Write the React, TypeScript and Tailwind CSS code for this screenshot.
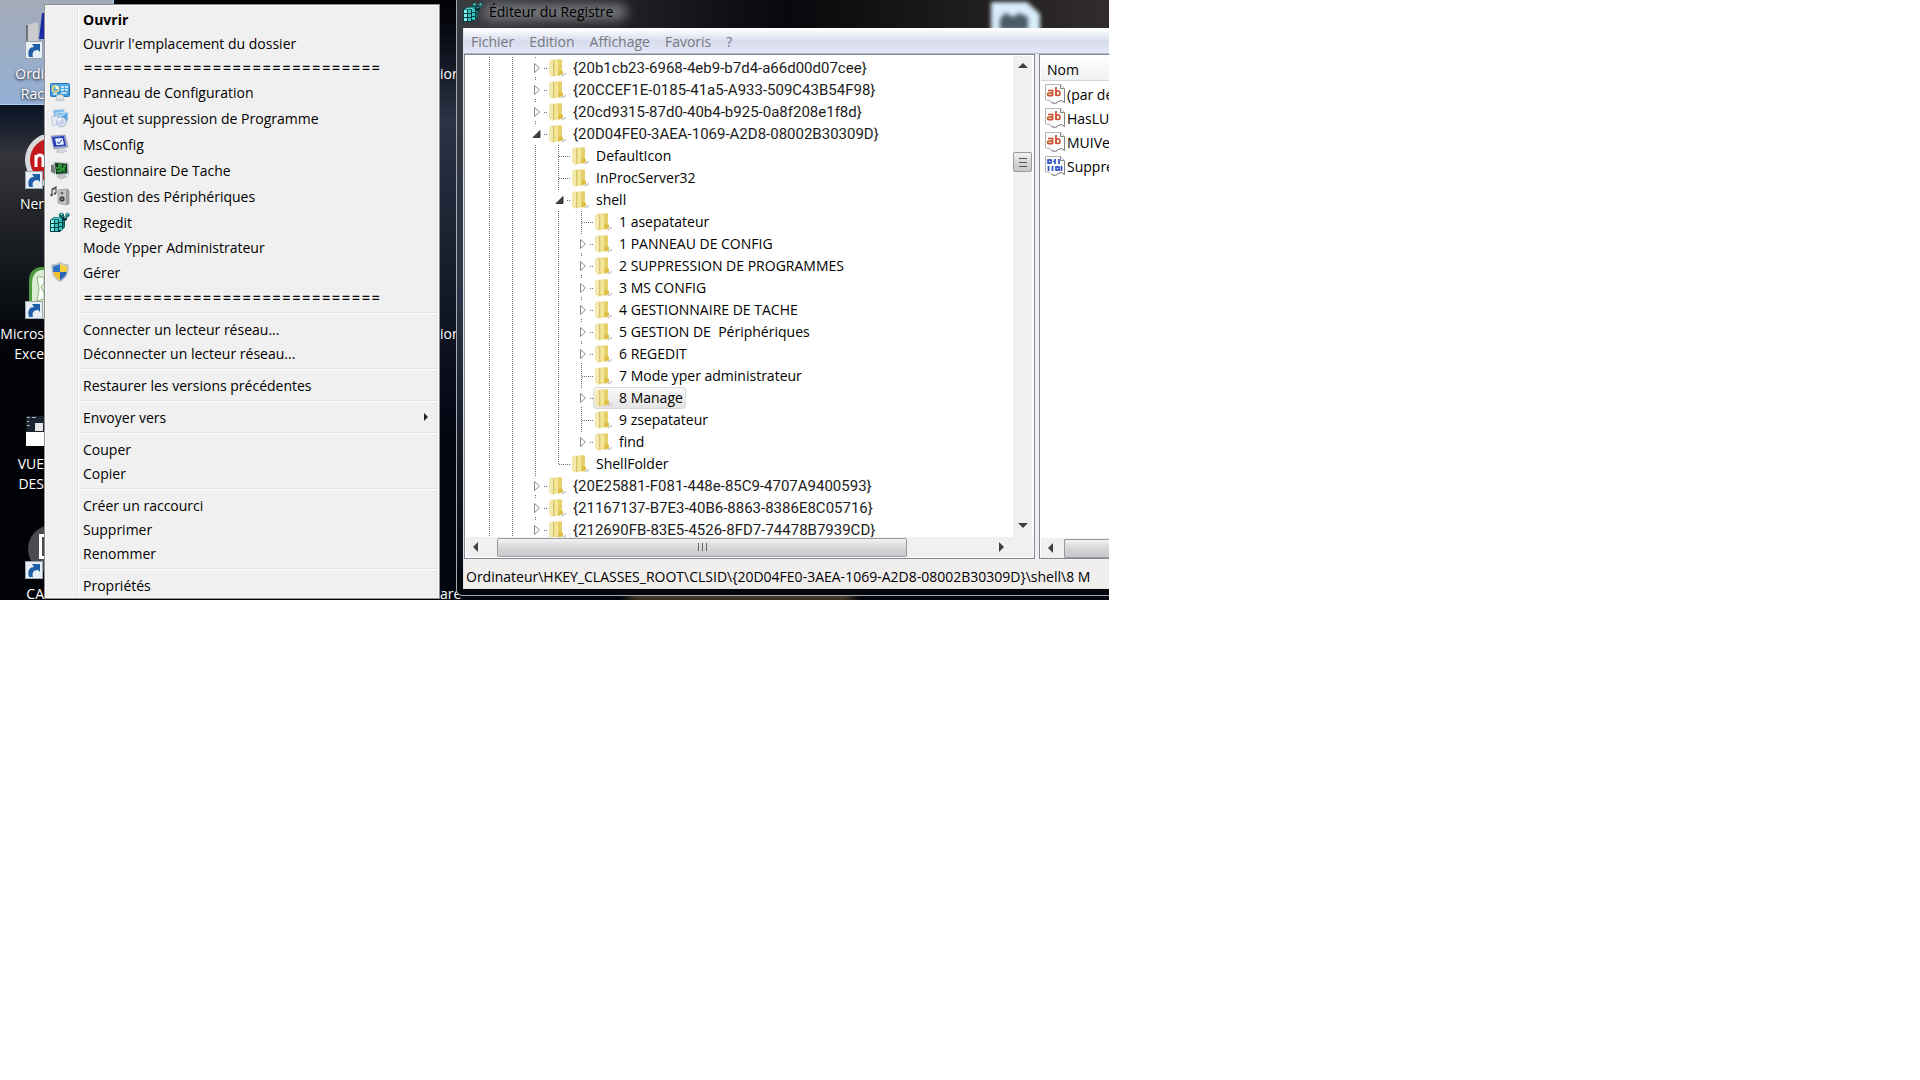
import React from "react";

type Cell = "line" | "tee" | "end" | "closed" | "open" | "closedEnd";
type Node = { cells: Cell[]; label: string; selected?: boolean };

const sep = "==============================";

function Regedit({ className = "" }: { className?: string }) {
  const cubes: [number, number][] = [
    [1, 8], [5, 8], [9, 7], [1, 12], [5, 12], [9, 11], [1, 16], [5, 16], [9, 15],
  ];
  return (
    <svg viewBox="0 0 20 20" className={"h-5 w-5 shrink-0 " + className} aria-hidden="true">
      <path d="M0 8 4 5h10l1 2v8l-5 5H0z" fill="#063d41" />
      <path d="M1 7.5 4.500 5.500l8.500-.3-3 2z" fill="#4fd0cf" />
      {cubes.map(([x, y]) => (
        <rect key={x + "-" + y} x={x} y={y} width="3" height="3" fill={x < 5 ? "#7df3ee" : "#35c4c2"} />
      ))}
      <path d="m13 9 1.500-1.500v3L13 12zm0 4 1.500-1.500v3L13 16z" fill="#148486" />
      <path d="m9 2 2.500-1.500L14 2v2.500L11.500 6 9 4.500z" fill="#0b5e62" />
      <path d="m10 2.300 1.500-.8 1.500.8-1.500 1z" fill="#8ff5f0" />
      <path d="m15.500 2 2-1.500 2 1.500v2l-2 1.500-2-1.500z" fill="#126c70" />
      <path d="m16.300 2.200 1.200-.7 1.200.7-1.200.9z" fill="#9af5f1" />
      <path d="m13 5.500 2-1.200 2 1.200v2L15 9l-2-1.500z" fill="#042c30" />
      <path d="m13.800 5.700 1.200-.6 1.200.6-1.200.8z" fill="#5edbd7" />
    </svg>
  );
}

function Panel() {
  return (
    <svg viewBox="0 0 20 20" className="h-5 w-5" aria-hidden="true">
      <rect x="0.500" y="1.500" width="19" height="13" rx="1" fill="#3b97d8" stroke="#2d78b4" />
      <path d="M1 2h18v5L1 11z" fill="#65b9ec" opacity=".6" />
      <circle cx="5.500" cy="7" r="3" fill="none" stroke="#f4d36a" strokeWidth="1.500" />
      <path d="M5.500 7V4a3 3 0 0 1 3 3z" fill="#fff" />
      <path d="M11 5h3M15 5h3M11 8h3M15 8h3M11 11h6M3 12h4" stroke="#e8f6ff" strokeWidth="1.300" />
      <ellipse cx="10" cy="15.500" rx="4" ry="3" fill="#e3e6e8" stroke="#a0a7ad" strokeWidth=".6" />
      <ellipse cx="10" cy="18" rx="5" ry="1.300" fill="#c3c8cc" opacity=".7" />
    </svg>
  );
}

function Programs() {
  return (
    <svg viewBox="0 0 20 20" className="h-5 w-5" aria-hidden="true">
      <path d="m3 2 11-1 1 9-11 1z" fill="#7fbce8" stroke="#c4dcee" />
      <path d="m6 5 12-1v9l-11 1z" fill="#5b9fd9" stroke="#d5e4f0" />
      <path d="m7 6 10-1-9 7z" fill="#9cd0f3" />
      <path d="m1 9 7-1 1 8-6 2z" fill="#e6eaf4" stroke="#b7bfd2" strokeWidth=".8" />
      <circle cx="11.500" cy="14" r="4.800" fill="#d5def2" stroke="#9ba9cb" strokeWidth=".7" />
      <path d="m11.500 14-4-2a5 5 0 0 1 3-2.500z" fill="#fff" />
      <circle cx="11.500" cy="14" r="1.400" fill="#fff" stroke="#8997ba" strokeWidth=".7" />
    </svg>
  );
}

function Monitor({ green = false }: { green?: boolean }) {
  return green ? (
    <svg viewBox="0 0 20 20" className="h-5 w-5" aria-hidden="true">
      <path d="m1 5 4-1v10l-4-2z" fill="#777e80" />
      <path d="m4 2 14 1 1 11-13 1z" fill="#9ba3a5" stroke="#c7cccd" strokeWidth=".7" />
      <path d="m5 3 12 1v9l-11 1z" fill="#123c1a" />
      <path d="M6 8h3V5h2v4h3V6h2M7 11h4V9h3v3" fill="none" stroke="#35b244" strokeWidth="1.300" />
      <path d="m9 15 5-1 3 3-6 2-4-2z" fill="#c3c7c9" stroke="#9ca2a5" strokeWidth=".5" />
    </svg>
  ) : (
    <svg viewBox="0 0 20 20" className="h-5 w-5" aria-hidden="true">
      <path d="m1 2 14-1 3 12-14 2z" fill="#aeb3cf" stroke="#8389ae" strokeWidth=".7" />
      <path d="m2 3 12-1 2 10-12 1z" fill="#2740b9" />
      <path d="m5 4.500 7.500-.5 1.500 6.500-7.500.7z" fill="#e9f3ff" />
      <path d="m7 8 2 1.500 3-4" fill="none" stroke="#3a62c9" strokeWidth="1.200" />
      <path d="m8 15 5-1 4 3-5 2-6-1z" fill="#d6d8de" stroke="#aaaebb" strokeWidth=".5" />
    </svg>
  );
}

function Devices() {
  return (
    <svg viewBox="0 0 20 20" className="h-5 w-5" aria-hidden="true">
      <path d="M2 9V3l4-2v6M2 4l4-2" fill="none" stroke="#53585c" strokeWidth="1.200" />
      <circle cx="1.600" cy="9" r="1.400" fill="#53585c" />
      <circle cx="5" cy="7.500" r="1.300" fill="#53585c" />
      <path d="m8 4 8-1 3 1v14l-3 1-8-2z" fill="#c3c5c6" stroke="#8e9192" strokeWidth=".7" />
      <path d="M16 3v16l3-1V4z" fill="#9a9b9d" />
      <circle cx="12" cy="7" r="1.600" fill="#707274" />
      <circle cx="12" cy="13" r="3.200" fill="#3c3e40" stroke="#e0e1e2" strokeWidth=".8" />
      <circle cx="12" cy="13" r="1" fill="#9a9c9e" />
    </svg>
  );
}

function Shield() {
  return (
    <svg viewBox="0 0 20 20" className="h-5 w-5" aria-hidden="true">
      <path d="M10 .5c2.500 1.600 5 2.200 8 2.400.3 8-1.500 13-8 16.600C3.500 15.900 1.700 10.900 2 2.900 5 2.700 7.500 2.100 10 .5z" fill="#d5dade" stroke="#8d99a2" strokeWidth=".7" />
      <path d="M10 2v8H3.300c-.3-2-.3-4-.2-6C5.800 3.700 8 3.200 10 2z" fill="#2e6fc4" />
      <path d="M10 2c2 1.200 4.200 1.700 6.900 2 .1 2 .1 4-.2 6H10z" fill="#f6cf3e" />
      <path d="M3.300 10H10v8.200C6 16 4 13.500 3.300 10z" fill="#f2c02c" />
      <path d="M16.700 10H10v8.200c4-2.200 6-4.700 6.700-8.200z" fill="#2c63b5" />
    </svg>
  );
}

function Folder() {
  return (
    <svg viewBox="0 0 17 20" className="h-5 w-[17px] shrink-0" aria-hidden="true">
      <path d="M12 17.500 17 14.500v2L13 18.500z" fill="#bdbdbd" opacity=".8" />
      <path d="M0 3 3 1l2 1v16l-2 1-3-3z" fill="#f3e9ae" />
      <path d="M4 2 11 1l2 1v13l-8 3.500z" fill="#eadb85" />
      <path d="M6 3 13 1.500V14l-7 3z" fill="#f3e697" />
      <path d="M9 2.400 13 1.500V14l-4 2z" fill="#e6d06b" />
      <path d="M10 12l4 1v3l-5 2z" fill="#dfbd43" />
      <path d="M4.500 2v16" stroke="#d0ba66" strokeWidth=".8" />
    </svg>
  );
}

function Guide({ kind }: { kind: Cell }) {
  const dots = { stroke: "#6b6b6b", strokeDasharray: "1 1", shapeRendering: "crispEdges" as const };
  const arrow = kind === "closed" || kind === "closedEnd";
  return (
    <svg viewBox="0 0 23 22" className="h-[22px] w-[23px] shrink-0" aria-hidden="true">
      {(kind === "line" || kind === "tee") && <path d="M11.500 0v22" {...dots} />}
      {kind === "end" && <path d="M11.500 0v11" {...dots} />}
      {(kind === "tee" || kind === "end") && <path d="M12 11.500h11" {...dots} />}
      {(arrow || kind === "open") && <path d="M11.500 0v2M20 11.500h3" {...dots} />}
      {kind === "closed" && <path d="M11.500 20v2" {...dots} />}
      {arrow && <path d="M10.500 6.500v9l5-4.500z" fill="#fff" stroke="#8c8c8c" />}
      {kind === "open" && <path d="M9 14.500h7v-7z" fill="#404040" stroke="#202020" strokeWidth=".8" />}
    </svg>
  );
}

const top = (label: string, kind: Cell = "closed"): Node => ({ cells: ["line", "line", kind], label });
const sub = (label: string, kind: Cell): Node => ({ cells: ["line", "line", "line", kind], label });
const leaf = (label: string, kind: Cell = "closed", selected = false): Node => ({
  cells: ["line", "line", "line", "line", kind],
  label,
  selected,
});

const tree: Node[] = [
  top("{20b1cb23-6968-4eb9-b7d4-a66d00d07cee}"),
  top("{20CCEF1E-0185-41a5-A933-509C43B54F98}"),
  top("{20cd9315-87d0-40b4-b925-0a8f208e1f8d}"),
  top("{20D04FE0-3AEA-1069-A2D8-08002B30309D}", "open"),
  sub("DefaultIcon", "tee"),
  sub("InProcServer32", "tee"),
  sub("shell", "open"),
  leaf("1 asepatateur", "tee"),
  leaf("1 PANNEAU DE CONFIG"),
  leaf("2 SUPPRESSION DE PROGRAMMES"),
  leaf("3 MS CONFIG"),
  leaf("4 GESTIONNAIRE DE TACHE"),
  leaf("5 GESTION DE  Périphériques"),
  leaf("6 REGEDIT"),
  leaf("7 Mode yper administrateur", "tee"),
  leaf("8 Manage", "closed", true),
  leaf("9 zsepatateur", "tee"),
  leaf("find", "closedEnd"),
  sub("ShellFolder", "end"),
  top("{20E25881-F081-448e-85C9-4707A9400593}"),
  top("{21167137-B7E3-40B6-8863-8386E8C05716}"),
  top("{212690FB-83E5-4526-8FD7-74478B7939CD}"),
];

type Item = { label: string; icon?: React.ReactNode; bold?: boolean; more?: boolean; tall?: boolean } | null;

const menu: Item[] = [
  { label: "Ouvrir", bold: true },
  { label: "Ouvrir l'emplacement du dossier" },
  { label: sep },
  { label: "Panneau de Configuration", icon: <Panel />, tall: true },
  { label: "Ajout et suppression de Programme", icon: <Programs />, tall: true },
  { label: "MsConfig", icon: <Monitor />, tall: true },
  { label: "Gestionnaire De Tache", icon: <Monitor green />, tall: true },
  { label: "Gestion des Périphériques", icon: <Devices />, tall: true },
  { label: "Regedit", icon: <Regedit />, tall: true },
  { label: "Mode Ypper Administrateur" },
  { label: "Gérer", icon: <Shield />, tall: true },
  { label: sep },
  null,
  { label: "Connecter un lecteur réseau..." },
  { label: "Déconnecter un lecteur réseau..." },
  null,
  { label: "Restaurer les versions précédentes" },
  null,
  { label: "Envoyer vers", more: true },
  null,
  { label: "Couper" },
  { label: "Copier" },
  null,
  { label: "Créer un raccourci" },
  { label: "Supprimer" },
  { label: "Renommer" },
  null,
  { label: "Propriétés" },
];

function ContextMenu() {
  return (
    <div role="menu" className="absolute top-1 left-11 w-[396px] border border-[#8f8f8f] bg-[#f0f0f0] px-[3px] pt-0.5 pb-px shadow-[inset_0_0_0_1px_#f8f8f8]">
      {menu.map((item, i) =>
        item ? (
          <button
            key={i}
            role="menuitem"
            className={"flex w-full items-center text-left whitespace-nowrap " + (item.tall ? "h-[26px]" : "h-6")}
          >
            <span className="flex h-full w-[30px] shrink-0 items-center border-r border-[#e2e3e3] pl-0.5">{item.icon}</span>
            <span
              className={
                "flex h-full flex-1 items-center border-l border-white pl-1 " +
                (item.bold ? "font-bold" : item.label === sep ? "font-[Inter] text-[15px]" : "")
              }
            >
              {item.label}
            </span>
            {item.more && (
              <svg viewBox="0 0 4 8" className="mr-2 h-2 w-1" aria-hidden="true">
                <path d="m0 0 4 4-4 4z" fill="#202020" />
              </svg>
            )}
          </button>
        ) : (
          <div key={i} role="separator" className="flex h-2">
            <span className="w-[30px] shrink-0 border-r border-[#e2e3e3]" />
            <span className="flex flex-1 items-center border-l border-white">
              <span className="h-0.5 w-full border-t border-b border-t-[#e0e0e0] border-b-white" />
            </span>
          </div>
        )
      )}
    </div>
  );
}

function Arrow({ d }: { d: string }) {
  return (
    <svg viewBox="0 0 10 10" className="h-2.5 w-2.5 shrink-0" aria-hidden="true">
      <path d={d} fill="#404040" />
    </svg>
  );
}
const UP = "M0 8 5 3l5 5z";
const DOWN = "M0 2h10L5 7z";
const LEFT = "M7 0v10L2 5z";
const RIGHT = "M3 0v10l5-5z";

function Value({ label, binary = false }: { label: string; binary?: boolean }) {
  return (
    <div className="flex h-6 items-center gap-0.5 whitespace-nowrap">
      <svg viewBox="0 0 20 20" className="h-5 w-5 shrink-0" aria-hidden="true">
        <path d="M.5 .5h15l4 4v14l-3-2-3 1-3 2-4-1-2-2-4-.5z" fill="#fbfbfb" stroke="#b5b5b5" />
        <path d="M15.500.5v4h4M19.500 5v13.500l-3-2-3 1-3 2-4-1" fill="none" stroke="#858585" />
        {binary ? (
          <g fill="none" stroke="#2d4fc4" strokeWidth="1.700">
            <rect x="3" y="4" width="3" height="3" />
            <path d="M10 3v5M14 3v5M8 5.500h1M3.500 10v5M7.500 10v5M16.500 10v5" />
            <rect x="11" y="11" width="3" height="3" />
          </g>
        ) : (
          <g fill="none" stroke="#c8502f" strokeWidth="1.700">
            <path d="M3 6.500h4.500V12M7.500 9H4a1.200 1.200 0 0 0 0 2.700h3.500M11 3v9" />
            <rect x="11" y="7" width="3.800" height="4.500" rx="1.200" />
          </g>
        )}
      </svg>
      <span>{label}</span>
    </div>
  );
}

const bar = "bg-linear-to-b from-[#f3f3f3] via-[#d6d6d8] to-[#c9c9cb] border border-[#9a9a9a] rounded-[2px]";

function Registry() {
  return (
    <section className="absolute top-0 right-0 left-[456px] rounded-bl-md border-b border-l border-[#a3a9b3] bg-linear-to-b from-[#3a3c40] via-[#2c3648] to-[#05070c] pb-1.5 pl-1.5">
      <header className="relative flex h-[28px] items-start overflow-hidden bg-linear-to-r from-[#3a3c40] via-[#08090c] to-[#322d2c]">
        <div className="absolute top-1 left-5 h-4 w-36 rounded-full bg-[#77797c] blur-[6px]" />
        <svg viewBox="0 0 60 32" className="absolute top-0 right-16 h-8 w-[60px] blur-[2px]" aria-hidden="true">
          <path d="M6 2h36l13 12v18H6z" fill="#d8eefa" />
          <path d="M15 30V18l6-5 7 4 6-4 9 4v13z" fill="#4c5d68" />
        </svg>
        <Regedit className="relative mt-0.5" />
        <h1 className="relative pt-0.5 pl-1.5 leading-5 text-black">Éditeur du Registre</h1>
      </header>
      <div className="border-b border-l border-[#dfe3ea] bg-[#f0eff4]">
        <nav className="flex h-[26px] items-center gap-[15px] border-t border-b border-t-white border-b-[#b5b8c6] bg-linear-to-b from-white via-[#d7dcee] to-[#e4e8f6] pl-[7px] text-[#77797f]">
          {["Fichier", "Edition", "Affichage", "Favoris", "?"].map((m) => (
            <button key={m}>{m}</button>
          ))}
        </nav>
        <div className="flex gap-1">
          <div className="flex w-[571px] flex-col border border-[#828790] bg-white p-px">
            <div className="flex h-[481px]">
              <ul className="flex-1 overflow-hidden pt-px pl-3">
                {tree.map((n) => (
                  <li key={n.label} className="flex h-[22px] items-center">
                    {n.cells.map((c, i) => (
                      <Guide key={i} kind={c} />
                    ))}
                    <button
                      className={
                        "flex h-[22px] items-center gap-[7px] rounded-[3px] border px-px pr-0.5 leading-4 whitespace-pre " +
                        (n.selected ? "border-[#d9d9d9] bg-linear-to-b from-[#fafafa] to-[#e5e5e5] " : "border-transparent ") +
                        (n.label.startsWith("{") ? "font-[Roboto] text-[15px] text-[#1c1c1c]" : "")
                      }
                    >
                      <Folder />
                      <span>{n.label}</span>
                    </button>
                  </li>
                ))}
              </ul>
              <div className="mr-px flex w-[19px] flex-col items-center bg-[#f0f0f0] pt-1">
                <Arrow d={UP} />
                <div className={"mt-[82px] flex h-5 w-[19px] flex-col items-center justify-center gap-[3px] " + bar}>
                  <i className="h-px w-2 bg-[#555]" />
                  <i className="h-px w-2 bg-[#555]" />
                  <i className="h-px w-2 bg-[#555]" />
                </div>
                <div className="mt-auto mb-1.5">
                  <Arrow d={DOWN} />
                </div>
              </div>
            </div>
            <div className="flex h-5 items-center bg-[#f0f0f0] pr-[27px] pl-[5px]">
              <Arrow d={LEFT} />
              <div className={"ml-4 flex h-[19px] w-[410px] items-center justify-center gap-[3px] " + bar}>
                <i className="h-2 w-px bg-[#666]" />
                <i className="h-2 w-px bg-[#666]" />
                <i className="h-2 w-px bg-[#666]" />
              </div>
              <div className="ml-auto">
                <Arrow d={RIGHT} />
              </div>
            </div>
          </div>
          <div className="flex min-w-0 flex-1 flex-col overflow-hidden border border-r-0 border-[#828790] bg-white pt-px pl-px">
            <div className="flex h-[25px] items-center border-b border-[#d5d5d5] bg-linear-to-b from-white to-[#f1f2f4] pt-0.5 pl-1.5">Nom</div>
            <div className="flex-1 pt-px pl-1">
              <Value label="(par dé" />
              <Value label="HasLU" />
              <Value label="MUIVe" />
              <Value label="Suppre" binary />
            </div>
            <div className="flex h-5 items-center bg-[#f0f0f0] pl-[5px]">
              <Arrow d={LEFT} />
              <div className={"ml-2 h-[19px] flex-1 rounded-r-none border-r-0 " + bar} />
            </div>
          </div>
        </div>
        <footer className="mt-px flex h-7 items-center overflow-hidden bg-[#f1eeee] pt-1 pl-0.5 whitespace-nowrap">
          {"Ordinateur\\HKEY_CLASSES_ROOT\\CLSID\\{20D04FE0-3AEA-1069-A2D8-08002B30309D}\\shell\\8 M"}
        </footer>
      </div>
    </section>
  );
}

function DesktopIcon({ lines, children, shortcut = true }: { lines: string[]; children: React.ReactNode; shortcut?: boolean }) {
  return (
    <div className="flex h-[130px] w-11 flex-col items-end overflow-hidden">
      <svg viewBox="0 0 19 54" className="h-[54px] w-[19px] shrink-0" aria-hidden="true">
        {children}
        {shortcut && (
          <g transform="translate(0 36)">
            <rect x=".5" y=".5" width="17" height="17" fill="#e9eef4" stroke="#9aa5b2" />
            <path d="M4 16C2 9 5 6 9 6L7 3h8v8l-2-2c-5 0-6 3-5 7z" fill="#1f5fa6" />
          </g>
        )}
      </svg>
      <div className="pt-[5px] text-right leading-5 text-white [text-shadow:0_1px_3px_#000]">
        {lines.map((l) => (
          <p key={l}>{l}</p>
        ))}
      </div>
    </div>
  );
}

export default function App() {
  return (
    <main className="min-h-screen bg-white">
      <div className='relative h-[600px] max-w-[1109px] overflow-hidden bg-[#020307] font-["Open_Sans","Noto_Sans",sans-serif] text-[14px] text-black'>
        <div className="absolute top-0 left-0 h-full w-11 bg-linear-to-b from-[#0c1426] from-[18%] via-[#34363b] via-[26%] to-[#020307] to-[60%]" />
        <div className="absolute top-0 right-0 left-[440px] h-full bg-linear-to-b from-[#020205] via-[#2b3345] via-[20%] to-[#03050f] to-[75%]" />
        <div className="absolute right-64 bottom-0 h-3 w-56 bg-[#6b5a34] blur-[6px]" />
        <div className="absolute top-0 left-0 h-[105px] w-[114px] border-r border-b border-[#a9cdf0] bg-linear-to-b from-[#a3abb8] to-[#93afd4]" />
        <div className="absolute top-[5px] left-0 flex flex-col">
          <DesktopIcon lines={["Ordi", "Rac"]}>
            <path d="M1 20 13 17v22H1z" fill="#c9cbcd" />
            <path d="M1 20h2v19H1z" fill="#6e7276" />
            <path d="m14 34 3-26h2v26z" fill="#1c2aa5" />
          </DesktopIcon>
          <DesktopIcon lines={["Ner"]}>
            <circle cx="27" cy="25" r="27" fill="#d9dadb" />
            <circle cx="27" cy="25" r="22" fill="#c3181c" />
            <path d="M11 32V20M11 24q1-4 4-4t3 4v8" fill="none" stroke="#fff" strokeWidth="3" />
          </DesktopIcon>
          <DesktopIcon lines={["Micros", "Exce"]}>
            <path d="M19 2h-4Q4 4 4 16v38h15z" fill="#4f9a3f" />
            <path d="M19 5h-3Q7 7 7 18v36h12z" fill="#dcebd3" />
            <path d="m12 12 7 0v6l-3 4 3 6v6l-7 2 2-12z" fill="#fff" stroke="#86b877" />
          </DesktopIcon>
          <DesktopIcon lines={["VUE", "DES"]} shortcut={false}>
            <path d="M1 21h18v16H1z" fill="#1b2230" />
            <path d="M2 22h3v1H2zm5 0h4v1H7zm-5 4h2v1H2zm0 4h3v1H2z" fill="#aeb6c4" />
            <path d="M10 28h8v8h-8z" fill="#e5e5e5" />
            <path d="M1 37h18v14H1z" fill="#fff" />
          </DesktopIcon>
          <DesktopIcon lines={["CA"]}>
            <circle cx="27" cy="24" r="24" fill="#4a4b4e" />
            <path d="M14 9h5v3h-2v19h2v3h-5z" fill="#fff" />
          </DesktopIcon>
        </div>
        <div className="absolute top-16 left-[440px] flex flex-col gap-[240px] leading-5 text-white">
          <span>ion</span>
          <span>ion</span>
          <span>are</span>
        </div>
        <ContextMenu />
        <Registry />
      </div>
    </main>
  );
}
